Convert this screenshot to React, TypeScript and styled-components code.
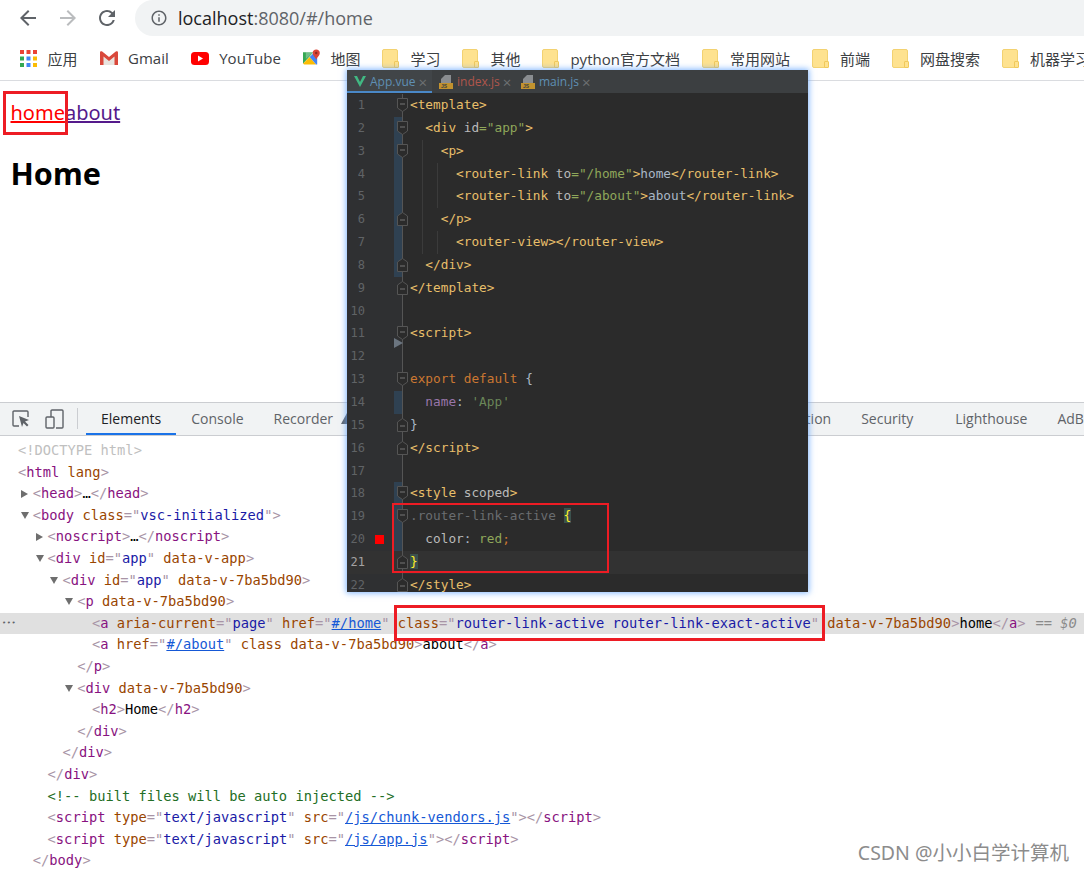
import React from 'react';
import styled, { createGlobalStyle } from 'styled-components';

const GlobalStyle = createGlobalStyle`
  html, body { margin: 0; padding: 0; background: #fff; }
`;

const uiFont = `"Open Sans", "Noto Sans CJK SC", sans-serif`;
const codeFont = `"DejaVu Sans Mono", monospace`;

const Page = styled.div`
  position: relative;
  width: 1084px;
  height: 872px;
  overflow: hidden;
  display: flex;
  flex-direction: column;
  font-family: ${uiFont};
`;

/* browser chrome */
const Toolbar = styled.div`
  height: 36px;
  display: flex;
  align-items: center;
  padding-left: 16px;
  gap: 15.5px;
  flex-shrink: 0;
`;

const AddressPill = styled.div`
  flex: 1;
  height: 36px;
  margin-left: 0.5px;
  border-radius: 18px 0 0 18px;
  background: #f1f3f4;
  display: flex;
  align-items: center;
  padding-left: 15px;
  gap: 10px;
  font-size: 18px;
  color: #5f6368;
`;

const Host = styled.span`
  color: #202124;
`;

const Bookmarks = styled.div`
  height: 44px;
  display: flex;
  align-items: center;
  gap: 22px;
  padding-left: 20px;
  border-bottom: 1px solid #dadce0;
  flex-shrink: 0;
  white-space: nowrap;
  overflow: hidden;
`;

const Bookmark = styled.div`
  display: flex;
  align-items: center;
  gap: 10.5px;
  font-size: 15px;
  color: #3c4043;
  flex-shrink: 0;
`;

const Folder = styled.span`
  position: relative;
  width: 14px;
  height: 17px;
  border: 1px solid #f3d271;
  border-radius: 2px;
  background: #fee28f;
  margin-right: 1.5px;

  &::after {
    content: '';
    position: absolute;
    right: -2px;
    bottom: -1px;
    width: 3px;
    height: 5px;
    border: 1px solid #f0c95c;
    border-radius: 1px;
    background: #fee28f;
  }
`;

/* page being previewed */
const Preview = styled.div`
  flex: 1;
  padding: 18px 0 0 10.5px;
  font-family: "Noto Sans", sans-serif;
`;

const LinkRow = styled.p`
  margin: 0;
  height: 28px;
  line-height: 28px;
  font-size: 20px;
`;

const PageLink = styled.a<{ $active?: boolean }>`
  color: ${p => (p.$active ? '#ff0000' : '#551a8b')};
  text-decoration: underline;
`;

const Heading = styled.h2`
  margin: 26px 0 0;
  font-size: 30.5px;
  line-height: 40px;
  font-weight: 700;
  color: #000;
`;

/* devtools */
const DevTools = styled.div`
  height: 470px;
  flex-shrink: 0;
  display: flex;
  flex-direction: column;
`;

const DevTabs = styled.div`
  height: 32px;
  background: #f1f3f4;
  border-top: 1px solid #cbcdd1;
  border-bottom: 1px solid #cbcdd1;
  display: flex;
  align-items: stretch;
  padding-left: 12px;
  font-size: 14px;
  white-space: nowrap;
  overflow: hidden;
`;

const IconSlot = styled.div`
  display: flex;
  align-items: center;
  gap: 15px;
  width: 65px;
  flex-shrink: 0;
  margin-right: 8px;
  border-right: 1px solid #cbcdd1;
  margin-top: 5px;
  margin-bottom: 6px;
`;

const DevTab = styled.div<{ $active?: boolean; $offset?: number }>`
  display: flex;
  align-items: center;
  padding: 0 15px 1px;
  margin-left: ${p => p.$offset ?? 0}px;
  flex-shrink: 0;
  color: ${p => (p.$active ? '#202124' : '#5f6368')};
  box-shadow: ${p => (p.$active ? 'inset 0 -2px 0 #1a73e8' : 'none')};
`;

const WarnMark = styled.svg`
  margin-left: 8px;
`;

const Tree = styled.div`
  flex: 1;
  padding-top: 4px;
  font-family: ${codeFont};
  font-size: 13.72px;
  line-height: 21.6px;
  white-space: pre;
  overflow: hidden;
  color: #a894a6;
`;

const Row = styled.div<{ $level: number; $selected?: boolean }>`
  position: relative;
  height: 21.6px;
  padding-left: ${p => 18 + p.$level * 14.8}px;
  background: ${p => (p.$selected ? '#e0e0e0' : 'transparent')};
`;

const Arrow = styled.span<{ $open?: boolean }>`
  position: absolute;
  top: 7px;
  margin-left: -12px;
  width: 0;
  height: 0;
  ${p =>
    p.$open
      ? 'border-left: 4.5px solid transparent; border-right: 4.5px solid transparent; border-top: 7px solid #6e6e6e;'
      : 'border-top: 4.5px solid transparent; border-bottom: 4.5px solid transparent; border-left: 7px solid #6e6e6e;'}
`;

const Dots = styled.span`
  position: absolute;
  left: 2px;
  top: 0;
  font-size: 7px;
  letter-spacing: 0.5px;
  color: #5f6368;
`;

const T = styled.span`color: #881280;`;
const A = styled.span`color: #994500;`;
const V = styled.span`color: #1a1aa6;`;
const U = styled.span`color: #1558d6; text-decoration: underline;`;
const X = styled.span`color: #000;`;
const C = styled.span`color: #236e25;`;
const Doc = styled.span`color: #c0c0c0;`;
const Eq = styled.span`color: #8a8a8a; margin-left: 10px;`;
const Dollar = styled.span`color: #8a8a8a; font-style: italic;`;

/* floating IDE window */
const Editor = styled.div`
  position: absolute;
  left: 347px;
  top: 70px;
  width: 461px;
  height: 522px;
  overflow: hidden;
  background: #2b2b2b;
  box-shadow: 0 0 6px 1px rgba(90, 160, 255, 0.75);
  display: flex;
  flex-direction: column;
`;

const EditorTabs = styled.div`
  height: 23px;
  flex-shrink: 0;
  background: #3c3f41;
  display: flex;
  font-family: "Open Sans", sans-serif;
  font-size: 12px;
`;

const EditorTab = styled.div<{ $active?: boolean; $width: number; $color: string }>`
  width: ${p => p.$width}px;
  display: flex;
  align-items: center;
  gap: 4px;
  padding-left: 7px;
  box-sizing: border-box;
  color: ${p => p.$color};
  box-shadow: ${p => (p.$active ? 'inset 0 -2px 0 #4a88c7' : 'none')};
  background: ${p => (p.$active ? '#414548' : 'transparent')};
`;

const CloseMark = styled.span`
  color: #6e7173;
  font-size: 15px;
  margin-left: -1px;
`;

const CodeArea = styled.div`
  flex: 1;
  padding-top: 1px;
  overflow: hidden;
  font-family: ${codeFont};
  font-size: 12.75px;
`;

const CodeLine = styled.div<{ $current?: boolean }>`
  position: relative;
  height: 22.85px;
  display: flex;
  line-height: 22.85px;
  background: ${p => (p.$current ? '#323232' : 'transparent')};
`;

const Gutter = styled.div<{ $current?: boolean }>`
  width: 55px;
  flex-shrink: 0;
  display: flex;
  background: ${p => (p.$current ? '#323232' : '#2f3032')};
  border-right: 1px solid #555;
`;

const LineNo = styled.span<{ $current?: boolean }>`
  width: 18px;
  text-align: right;
  font-size: 12px;
  color: ${p => (p.$current ? '#a4a3a3' : '#606366')};
`;

const Swatch = styled.span`
  width: 29px;
  display: flex;
  align-items: center;
  justify-content: center;

  i {
    width: 9px;
    height: 9px;
    background: #ff0000;
  }
`;

const ChangeBar = styled.span<{ $on?: boolean }>`
  width: 8px;
  background: ${p => (p.$on ? '#2f4152' : 'transparent')};
`;

const FoldIcon = styled.svg`
  position: absolute;
  left: 50px;
  top: 4px;
`;

const FoldHint = styled.svg`
  position: absolute;
  z-index: 1;
  left: 47px;
  top: 16px;
`;

const Code = styled.div<{ $guides: number }>`
  flex: 1;
  padding-left: 7px;
  white-space: pre;
  color: #a9b7c6;
  background-image: ${p =>
    p.$guides === 2
      ? 'linear-gradient(#3b3b3b, #3b3b3b), linear-gradient(#3b3b3b, #3b3b3b)'
      : p.$guides === 1
        ? 'linear-gradient(#3b3b3b, #3b3b3b)'
        : 'none'};
  background-size: 1px 100%;
  background-repeat: no-repeat;
  background-position: 19px 0, 34px 0;
`;

const K = styled.span`color: #e8bf6a;`;
const Kw = styled.span`color: #cc7832;`;
const At = styled.span`color: #bababa;`;
const S = styled.span`color: #8fa75a;`;
const Str = styled.span`color: #6a8759;`;
const Pu = styled.span`color: #9876aa;`;
const Dim = styled.span`color: #6a6d70;`;
const Br = styled.span`color: #ffef28; background: #3b514d;`;
const Blue = styled.span`color: #a9b7c6;`;

/* annotations laid over the screenshot */
const RedBox = styled.div<{ $l: number; $t: number; $w: number; $h: number; $b?: number }>`
  position: absolute;
  left: ${p => p.$l}px;
  top: ${p => p.$t}px;
  width: ${p => p.$w}px;
  height: ${p => p.$h}px;
  box-sizing: border-box;
  border: ${p => p.$b ?? 3}px solid #ed1c24;
`;

const Watermark = styled.div`
  position: absolute;
  right: 15px;
  top: 840px;
  font-family: "Noto Sans", "Noto Sans CJK SC", sans-serif;
  font-size: 19.5px;
  line-height: 26px;
  color: #8c8c8c;
`;

const BackIcon = ({ color }: { color: string }) => (
  <svg width="24" height="24" viewBox="0 0 24 24" fill={color}>
    <path d="M20 11H7.83l5.59-5.59L12 4l-8 8 8 8 1.41-1.41L7.83 13H20v-2z" />
  </svg>
);

const ForwardIcon = ({ color }: { color: string }) => (
  <svg width="24" height="24" viewBox="0 0 24 24" fill={color}>
    <path d="M12 4l-1.41 1.41L16.17 11H4v2h12.17l-5.58 5.59L12 20l8-8z" />
  </svg>
);

const ReloadIcon = () => (
  <svg width="24" height="24" viewBox="0 0 24 24" fill="#5f6368">
    <path d="M17.65 6.35A7.95 7.95 0 0 0 12 4c-4.42 0-7.99 3.58-7.99 8s3.57 8 7.99 8c3.73 0 6.84-2.55 7.73-6h-2.08A5.99 5.99 0 0 1 12 18c-3.31 0-6-2.69-6-6s2.69-6 6-6c1.66 0 3.14.69 4.22 1.78L13 11h7V4l-2.35 2.35z" />
  </svg>
);

const InfoIcon = () => (
  <svg width="18" height="18" viewBox="0 0 24 24" fill="#5f6368">
    <path d="M11 7h2v2h-2zm0 4h2v6h-2zm1-9C6.48 2 2 6.48 2 12s4.48 10 10 10 10-4.48 10-10S17.52 2 12 2zm0 18c-4.41 0-8-3.59-8-8s3.59-8 8-8 8 3.59 8 8-3.59 8-8 8z" />
  </svg>
);

const appColors = ['#ea4335', '#ea4335', '#ea4335', '#34a853', '#4285f4', '#fbbc04', '#34a853', '#4285f4', '#fbbc04'];

const AppsIcon = () => (
  <svg width="17" height="17" viewBox="0 0 17 17">
    {appColors.map((c, i) => (
      <rect key={i} x={(i % 3) * 6.5} y={Math.floor(i / 3) * 6.5} width="4" height="4" fill={c} />
    ))}
  </svg>
);

const GmailIcon = () => (
  <svg width="18" height="14" viewBox="0 0 18 14">
    <path d="M3 2 9 7l6-5v12H3z" fill="#e8e4df" />
    <path d="M0 1.5C0 .3 1.2-.2 2.2.5L9 6l6.8-5.5c1-.7 2.2-.2 2.2 1V14h-3.5V5.5L9 10 3.5 5.5V14H0z" fill="#d9483b" />
  </svg>
);

const YoutubeIcon = () => (
  <svg width="18" height="13" viewBox="0 0 18 13">
    <rect width="18" height="13" rx="3.5" fill="#ff0000" />
    <path d="M7 3.5v6l5-3z" fill="#fff" />
  </svg>
);

const MapsIcon = () => (
  <svg width="17" height="18" viewBox="0 0 18 18">
    <path d="M0 3h11L0 15z" fill="#34a853" />
    <path d="M0 15 7 8l7 8H1.5z" fill="#fbbc04" />
    <path d="M7 8l4-4 4 5v7h-1z" fill="#4285f4" />
    <path d="M3 3h8L3 10z" fill="#e8eaed" opacity="0.35" />
    <path d="M14 0c2.2 0 3.8 1.6 3.8 3.6C17.8 6 15.2 8 14 10.5 12.8 8 10.2 6 10.2 3.6 10.2 1.6 11.8 0 14 0z" fill="#db4437" />
    <circle cx="14" cy="3.6" r="1.3" fill="#8e2a20" />
  </svg>
);

const InspectIcon = () => (
  <svg width="18" height="18" viewBox="0 0 18 18" fill="none">
    <path d="M7 16H2a1 1 0 0 1-1-1V2a1 1 0 0 1 1-1h13a1 1 0 0 1 1 1v5" stroke="#5f6368" strokeWidth="1.4" />
    <path d="M7 6l10 4-4 1.5 3.5 3.5-1.5 1.5-3.5-3.5L10 17z" fill="#5f6368" />
  </svg>
);

const DeviceIcon = () => (
  <svg width="19" height="20" viewBox="0 0 19 20" fill="none" stroke="#5f6368" strokeWidth="1.4">
    <path d="M6 8V2a1 1 0 0 1 1-1h10a1 1 0 0 1 1 1v16a1 1 0 0 1-1 1h-6" />
    <rect x="1" y="8" width="8" height="11" rx="1" />
  </svg>
);

const VueIcon = () => (
  <svg width="12" height="11" viewBox="0 0 12 11">
    <path d="M0 0h3l3 6 3-6h3L6 11z" fill="#41b883" />
  </svg>
);

const JsIcon = () => (
  <svg width="14" height="14" viewBox="0 0 14 14">
    <path d="M6 0h6v8H2V4z" fill="#8a8d90" />
    <rect y="8" width="14" height="6" fill="#c2922e" />
    <text x="2" y="13" fontSize="5" fontFamily="Liberation Sans" fontWeight="700" fill="#3c3f41">JS</text>
  </svg>
);

const FoldMark = ({ end }: { end?: boolean }) => (
  <FoldIcon width="11" height="14" viewBox="0 0 11 14">
    <path
      d={end ? 'M.5 13.5V4L5.5.5l5 3.5v9.5z' : 'M.5.5h10V10l-5 3.5-5-3.5z'}
      fill="#2b2b2b"
      stroke="#555"
    />
    <path d={end ? 'M3 8h5' : 'M3 6h5'} stroke="#777" />
  </FoldIcon>
);

type Line = {
  code?: React.ReactNode;
  fold?: 'start' | 'end';
  changed?: boolean;
  guides?: number;
  swatch?: boolean;
  current?: boolean;
  hint?: boolean;
};

const lines: Line[] = [
  { fold: 'start', code: <K>{'<template>'}</K> },
  { fold: 'start', changed: true, code: <>  <K>{'<div '}</K><At>id</At><S>="app"</S><K>{'>'}</K></> },
  { fold: 'start', changed: true, guides: 1, code: <>    <K>{'<p>'}</K></> },
  { changed: true, guides: 2, code: <>      <K>{'<router-link '}</K><At>to</At><S>="/home"</S><K>{'>'}</K><Blue>home</Blue><K>{'</router-link>'}</K></> },
  { changed: true, guides: 2, code: <>      <K>{'<router-link '}</K><At>to</At><S>="/about"</S><K>{'>'}</K><Blue>about</Blue><K>{'</router-link>'}</K></> },
  { fold: 'end', changed: true, guides: 1, code: <>    <K>{'</p>'}</K></> },
  { changed: true, guides: 2, code: <>      <K>{'<router-view></router-view>'}</K></> },
  { fold: 'end', changed: true, code: <>  <K>{'</div>'}</K></> },
  { fold: 'end', code: <K>{'</template>'}</K> },
  {},
  { fold: 'start', hint: true, code: <K>{'<script>'}</K> },
  {},
  { fold: 'start', code: <><Kw>export default</Kw> {'{'}</> },
  { changed: true, code: <>  <Pu>name</Pu>: <Str>'App'</Str></> },
  { fold: 'end', code: <>{'}'}</> },
  { fold: 'end', code: <K>{'</script>'}</K> },
  {},
  { fold: 'start', changed: true, code: <><K>{'<style '}</K><At>scoped</At><K>{'>'}</K></> },
  { fold: 'start', changed: true, code: <><Dim>.router-link-active</Dim> <Br>{'{'}</Br></> },
  { changed: true, swatch: true, code: <>  <At>color</At>: <S>red</S><Kw>;</Kw></> },
  { fold: 'end', current: true, code: <Br>{'}'}</Br> },
  { fold: 'end', code: <K>{'</style>'}</K> },
];

export default function App() {
  return (
    <Page>
      <GlobalStyle />
      <Toolbar>
        <BackIcon color="#5f6368" />
        <ForwardIcon color="#babcbe" />
        <ReloadIcon />
        <AddressPill>
          <InfoIcon />
          <span><Host>localhost</Host>:8080/#/home</span>
        </AddressPill>
      </Toolbar>

      <Bookmarks>
        <Bookmark><AppsIcon />应用</Bookmark>
        <Bookmark><GmailIcon />Gmail</Bookmark>
        <Bookmark><YoutubeIcon />YouTube</Bookmark>
        <Bookmark><MapsIcon />地图</Bookmark>
        {['学习', '其他', 'python官方文档', '常用网站', '前端', '网盘搜索', '机器学习'].map(name => (
          <Bookmark key={name}><Folder />{name}</Bookmark>
        ))}
      </Bookmarks>

      <Preview>
        <LinkRow>
          <PageLink $active>home</PageLink>
          <PageLink>about</PageLink>
        </LinkRow>
        <Heading>Home</Heading>
      </Preview>

      <DevTools>
        <DevTabs>
          <IconSlot>
            <InspectIcon />
            <DeviceIcon />
          </IconSlot>
          <DevTab $active>Elements</DevTab>
          <DevTab>Console</DevTab>
          <DevTab>
            Recorder
            <WarnMark width="12" height="11" viewBox="0 0 12 11">
              <path d="M6 0l6 11H0z" fill="#5f6368" />
            </WarnMark>
          </DevTab>
          <DevTab $offset={375}>Application</DevTab>
          <DevTab>Security</DevTab>
          <DevTab $offset={12}>Lighthouse</DevTab>
          <DevTab>AdBlock</DevTab>
        </DevTabs>
        <Tree>
          <Row $level={0}><Doc>{'<!DOCTYPE html>'}</Doc></Row>
          <Row $level={0}>{'<'}<T>html</T> <A>lang</A>{'>'}</Row>
          <Row $level={1}><Arrow />{'<'}<T>head</T>{'>'}<X>…</X>{'</'}<T>head</T>{'>'}</Row>
          <Row $level={1}><Arrow $open />{'<'}<T>body</T> <A>class</A>="<V>vsc-initialized</V>"{'>'}</Row>
          <Row $level={2}><Arrow />{'<'}<T>noscript</T>{'>'}<X>…</X>{'</'}<T>noscript</T>{'>'}</Row>
          <Row $level={2}><Arrow $open />{'<'}<T>div</T> <A>id</A>="<V>app</V>" <A>data-v-app</A>{'>'}</Row>
          <Row $level={3}><Arrow $open />{'<'}<T>div</T> <A>id</A>="<V>app</V>" <A>data-v-7ba5bd90</A>{'>'}</Row>
          <Row $level={4}><Arrow $open />{'<'}<T>p</T> <A>data-v-7ba5bd90</A>{'>'}</Row>
          <Row $level={5} $selected>
            <Dots>•••</Dots>
            {'<'}<T>a</T> <A>aria-current</A>="<V>page</V>" <A>href</A>="<U>#/home</U>" <A>class</A>="<V>router-link-active router-link-exact-active</V>" <A>data-v-7ba5bd90</A>{'>'}<X>home</X>{'</'}<T>a</T>{'>'}<Eq>==</Eq> <Dollar>$0</Dollar>
          </Row>
          <Row $level={5}>{'<'}<T>a</T> <A>href</A>="<U>#/about</U>" <A>class</A> <A>data-v-7ba5bd90</A>{'>'}<X>about</X>{'</'}<T>a</T>{'>'}</Row>
          <Row $level={4}>{'</'}<T>p</T>{'>'}</Row>
          <Row $level={4}><Arrow $open />{'<'}<T>div</T> <A>data-v-7ba5bd90</A>{'>'}</Row>
          <Row $level={5}>{'<'}<T>h2</T>{'>'}<X>Home</X>{'</'}<T>h2</T>{'>'}</Row>
          <Row $level={4}>{'</'}<T>div</T>{'>'}</Row>
          <Row $level={3}>{'</'}<T>div</T>{'>'}</Row>
          <Row $level={2}>{'</'}<T>div</T>{'>'}</Row>
          <Row $level={2}><C>{'<!-- built files will be auto injected -->'}</C></Row>
          <Row $level={2}>{'<'}<T>script</T> <A>type</A>="<V>text/javascript</V>" <A>src</A>="<U>/js/chunk-vendors.js</U>"{'></'}<T>script</T>{'>'}</Row>
          <Row $level={2}>{'<'}<T>script</T> <A>type</A>="<V>text/javascript</V>" <A>src</A>="<U>/js/app.js</U>"{'></'}<T>script</T>{'>'}</Row>
          <Row $level={1}>{'</'}<T>body</T>{'>'}</Row>
        </Tree>
      </DevTools>

      <Editor>
        <EditorTabs>
          <EditorTab $active $width={85} $color="#5f8fb4"><VueIcon />App.vue<CloseMark>×</CloseMark></EditorTab>
          <EditorTab $width={82} $color="#b0564c"><JsIcon />index.js<CloseMark>×</CloseMark></EditorTab>
          <EditorTab $width={90} $color="#5f8fb4"><JsIcon />main.js<CloseMark>×</CloseMark></EditorTab>
        </EditorTabs>
        <CodeArea>
          {lines.map((line, i) => (
            <CodeLine key={i} $current={line.current}>
              <Gutter $current={line.current}>
                <LineNo $current={line.current}>{i + 1}</LineNo>
                <Swatch>{line.swatch && <i />}</Swatch>
                <ChangeBar $on={line.changed} />
              </Gutter>
              {line.fold && <FoldMark end={line.fold === 'end'} />}
              {line.hint && (
                <FoldHint width="9" height="10" viewBox="0 0 9 10">
                  <path d="M0 0l9 5-9 5z" fill="#6b7580" />
                </FoldHint>
              )}
              <Code $guides={line.guides ?? 0}>{line.code}</Code>
            </CodeLine>
          ))}
        </CodeArea>
      </Editor>

      <RedBox $l={3} $t={91} $w={65} $h={44} />
      <RedBox $l={392} $t={503} $w={217} $h={70} $b={2} />
      <RedBox $l={394} $t={605} $w={431} $h={36} />
      <Watermark>CSDN @小小白学计算机</Watermark>
    </Page>
  );
}
